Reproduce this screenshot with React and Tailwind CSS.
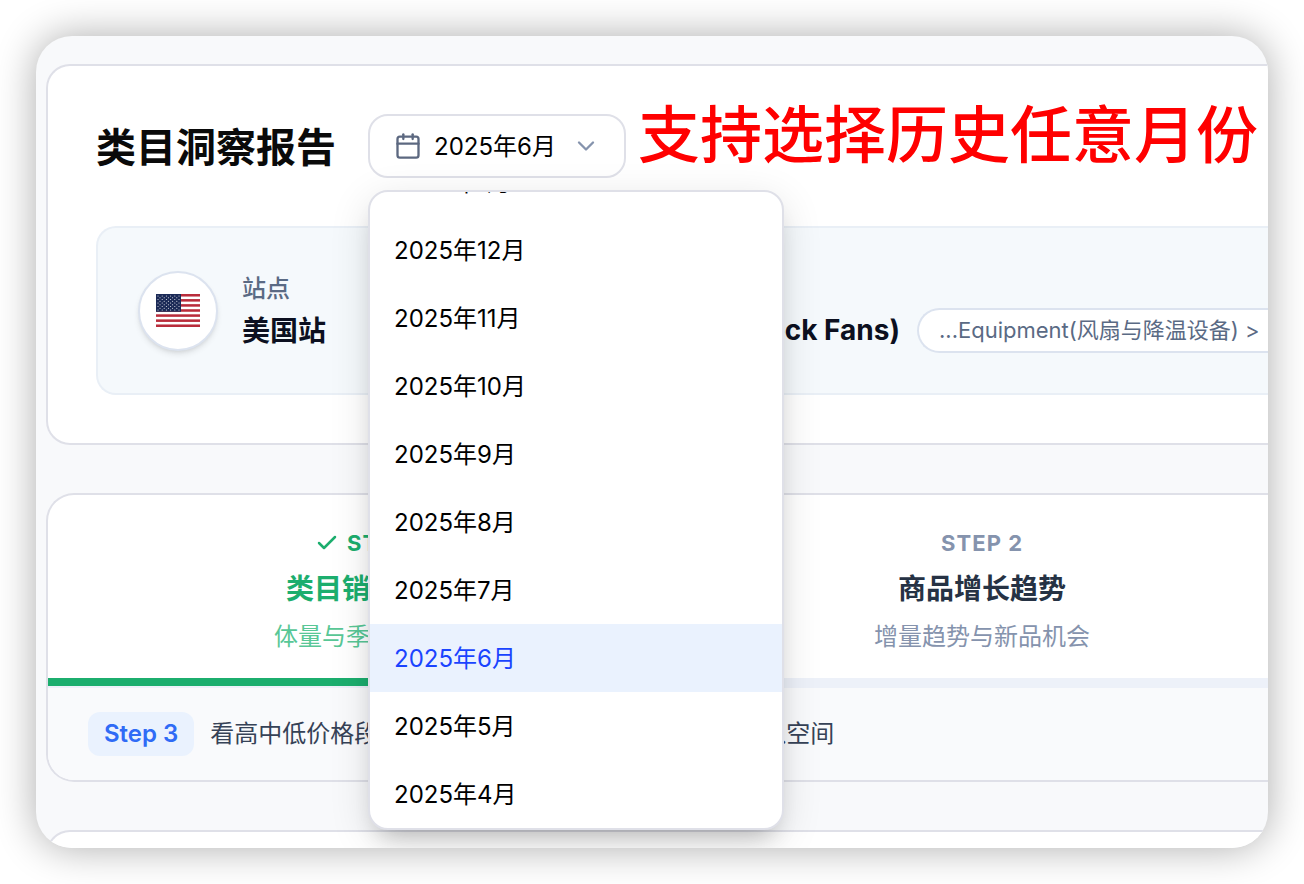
import { useState } from "react";
import { Calendar, Check, ChevronDown } from "lucide-react";

const meses = [
  "2026年1月",
  "2025年12月",
  "2025年11月",
  "2025年10月",
  "2025年9月",
  "2025年8月",
  "2025年7月",
  "2025年6月",
  "2025年5月",
  "2025年4月",
];

function UsFlag() {
  const stars = [];
  for (let row = 0; row < 9; row++) {
    const count = row % 2 === 0 ? 6 : 5;
    for (let i = 0; i < count; i++) {
      stars.push({ x: (row % 2 === 0 ? 2 : 4) + i * 4.2, y: 1.9 + row * 1.75 });
    }
  }

  return (
    <svg viewBox="0 0 44 33" className="w-11" aria-hidden="true">
      <rect width="44" height="33" fill="#fff" />
      {[0, 2, 4, 6, 8, 10, 12].map((i) => (
        <rect key={i} y={(i * 33) / 13} width="44" height={33 / 13} fill="#b92c3b" />
      ))}
      <rect width="25" height={(33 / 13) * 7} fill="#1b2a57" />
      {stars.map((s) => (
        <circle key={`${s.x}-${s.y}`} cx={s.x} cy={s.y} r="0.5" fill="#fff" />
      ))}
    </svg>
  );
}

function MonthPicker() {
  const [mes, setMes] = useState("2025年6月");
  const [open, setOpen] = useState(true);

  return (
    <div className="relative ml-8">
      <button
        onClick={() => setOpen(!open)}
        aria-expanded={open}
        className="flex h-16 w-[258px] items-center gap-3 whitespace-nowrap rounded-[20px] border-2 border-[#dfe0e8] bg-white px-6 text-2xl text-black"
      >
        <Calendar size={28} className="shrink-0 text-[#5c6880]" />
        <span className="pt-0.5">{mes}</span>
        <ChevronDown size={28} className="ml-auto shrink-0 text-[#8593ad]" />
      </button>
      {open && (
        <div className="absolute left-0 top-full z-10 mt-3 flex h-[640px] w-[416px] flex-col justify-end overflow-hidden rounded-[20px] border-2 border-[#dfe0e8] bg-white shadow-[0_10px_40px_rgba(0,0,0,0.12),0_16px_24px_-12px_rgba(0,0,0,0.24)]">
          {meses.map((m) => (
            <button
              key={m}
              onClick={() => setMes(m)}
              className={
                m === mes
                  ? "h-[68px] shrink-0 bg-[#eaf2fe] px-6 pt-0.5 text-left text-2xl text-[#1a44ff]"
                  : "h-[68px] shrink-0 px-6 pt-0.5 text-left text-2xl text-black"
              }
            >
              {m}
            </button>
          ))}
        </div>
      )}
    </div>
  );
}

function ReportHeader() {
  return (
    <section className="rounded-l-3xl border-2 border-r-0 border-[#dfe0e8] bg-white py-12 pl-12">
      <div className="flex items-center whitespace-nowrap">
        <h1 className="pt-1 text-[40px] font-bold leading-15 text-neutral-950">类目洞察报告</h1>
        <MonthPicker />
        <p className="ml-3 self-start text-[62px] font-medium leading-11 text-[#ff0000]">
          支持选择历史任意月份
        </p>
      </div>

      <div className="mt-12 flex items-center whitespace-nowrap rounded-l-[20px] border-2 border-r-0 border-[#e9eff6] bg-[#f5f9fc] py-10 pl-10">
        <div className="flex size-20 shrink-0 items-center justify-center rounded-full border-2 border-[#dce3ef] bg-white shadow-md">
          <UsFlag />
        </div>
        <div className="ml-6 w-[382px] shrink-0">
          <p className="text-2xl font-medium leading-[42px] text-[#5a6a84]">站点</p>
          <p className="text-[28px] font-bold leading-[43px] text-[#0c1020]">美国站</p>
        </div>
        <div className="min-w-0 flex-1">
          <p className="text-2xl font-medium leading-10 text-[#5a6a84]">类目</p>
          <div className="flex items-center">
            <p className="w-[276px] shrink-0 text-right text-[28px] font-bold leading-[45px] text-[#0c1020]">
              颈部风扇(Neck Fans)
            </p>
            <p className="ml-[17px] min-w-0 flex-1 rounded-l-full border-2 border-r-0 border-[#dce3ef] bg-white pl-5 text-[22px] leading-[41px] text-[#5a6a84]">
              ...Equipment(风扇与降温设备) &gt;
            </p>
          </div>
        </div>
      </div>
    </section>
  );
}

function StepsCard() {
  return (
    <section className="mt-12 overflow-hidden whitespace-nowrap rounded-l-[28px] border-2 border-r-0 border-[#dfe0e8] bg-white">
      <div className="grid grid-cols-[10fr_9fr] border-b-2 border-[#edf1f9]">
        <button className="flex flex-col items-center border-b-8 border-[#1cae6e] pt-8 pb-6 text-[#1cae6e]">
          <span className="flex items-center gap-2 text-[22px] font-bold leading-8 tracking-wider">
            <Check size={24} strokeWidth={2.5} />
            STEP 1
          </span>
          <span className="mt-2 text-[28px] font-bold leading-11">类目销量趋势</span>
          <span className="mt-2 text-2xl leading-[35px] text-[#58c796]">体量与季节性特征</span>
        </button>
        <button className="flex flex-col items-center border-b-8 border-[#edf1f9] pt-8 pb-6 text-[#8593ad]">
          <span className="text-[22px] font-bold leading-8 tracking-wider">STEP 2</span>
          <span className="mt-2 text-[28px] font-bold leading-11 text-[#263244]">商品增长趋势</span>
          <span className="mt-2 text-2xl leading-[35px]">增量趋势与新品机会</span>
        </button>
      </div>
      <div className="flex items-center gap-4 bg-[#f9fafc] px-10 py-6 text-2xl">
        <span className="rounded-xl bg-[#eaf2fe] px-4 font-semibold leading-11 text-[#2f6bf6]">Step 3</span>
        <p className="leading-11 text-[#364257]">看高中低价格段的销量与竞争分布，判断价格带的切入空间</p>
      </div>
    </section>
  );
}

function App() {
  return (
    <div className="h-screen bg-white p-9 font-[Inter,'Noto_Sans_CJK_SC',sans-serif]">
      <main className="h-full overflow-hidden rounded-[36px] bg-[#f8f9fb] pt-7 pl-[10px] shadow-[0_0_40px_rgba(0,0,0,0.33)]">
        <div className="-mr-1">
          <ReportHeader />
          <StepsCard />
          <section className="mt-12 h-24 rounded-l-3xl border-2 border-r-0 border-[#dfe0e8] bg-white"></section>
        </div>
      </main>
    </div>
  );
}

export default App;
